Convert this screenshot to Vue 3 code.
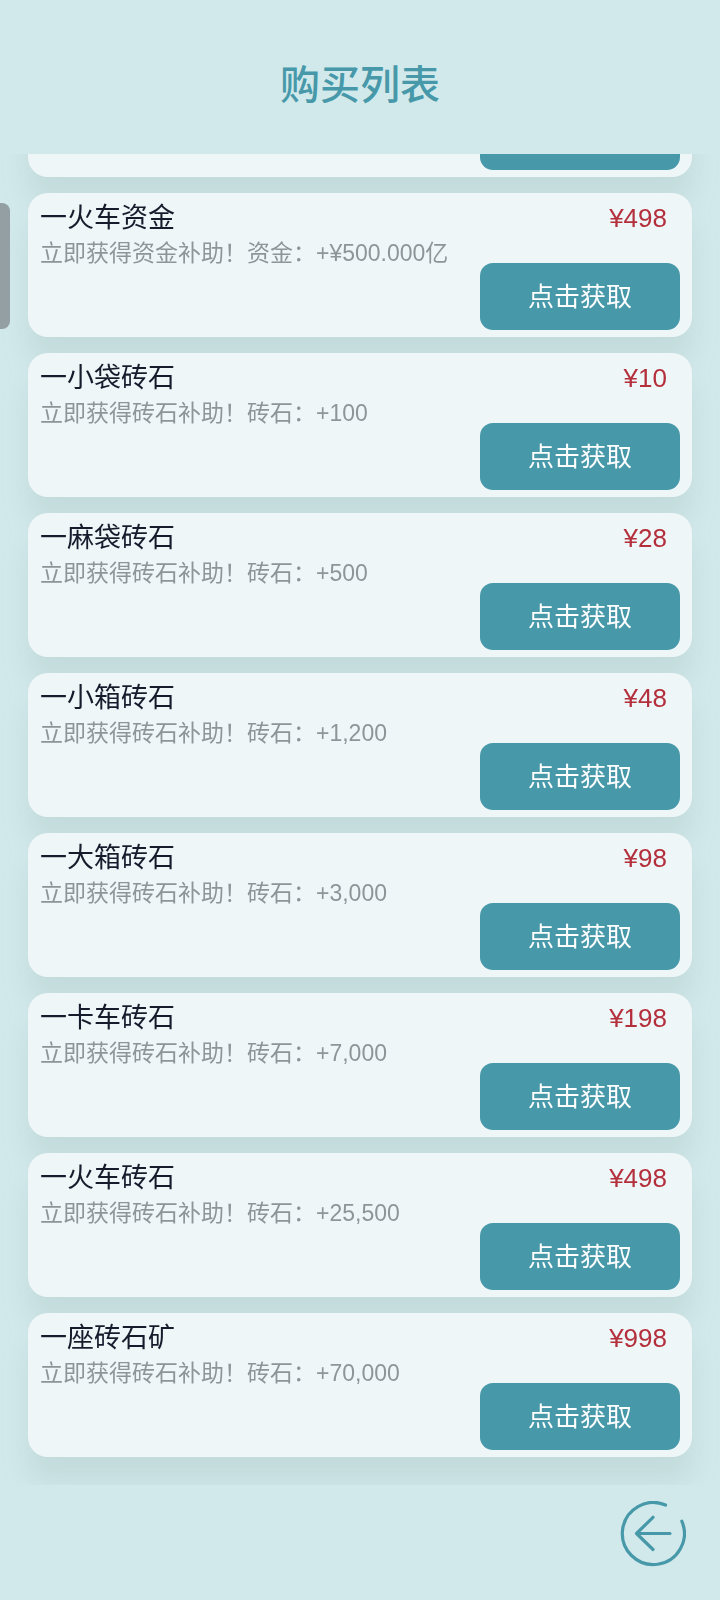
<script setup>
const items = [
  { id: 0, name: '', desc: '', price: '', action: '' },
  { id: 1, name: '一火车资金', desc: '立即获得资金补助！资金：+¥500.000亿', price: '¥498', action: '点击获取' },
  { id: 2, name: '一小袋砖石', desc: '立即获得砖石补助！砖石：+100', price: '¥10', action: '点击获取' },
  { id: 3, name: '一麻袋砖石', desc: '立即获得砖石补助！砖石：+500', price: '¥28', action: '点击获取' },
  { id: 4, name: '一小箱砖石', desc: '立即获得砖石补助！砖石：+1,200', price: '¥48', action: '点击获取' },
  { id: 5, name: '一大箱砖石', desc: '立即获得砖石补助！砖石：+3,000', price: '¥98', action: '点击获取' },
  { id: 6, name: '一卡车砖石', desc: '立即获得砖石补助！砖石：+7,000', price: '¥198', action: '点击获取' },
  { id: 7, name: '一火车砖石', desc: '立即获得砖石补助！砖石：+25,500', price: '¥498', action: '点击获取' },
  { id: 8, name: '一座砖石矿', desc: '立即获得砖石补助！砖石：+70,000', price: '¥998', action: '点击获取' },
]
</script>

<template>
  <div class="page">
    <header class="header">
      <h1>购买列表</h1>
    </header>
    <main class="scroller">
      <ul class="list">
        <li v-for="item in items" :key="item.id" class="card">
          <div class="info">
            <h2>{{ item.name }}</h2>
            <p>{{ item.desc }}</p>
          </div>
          <div class="side">
            <span class="price">{{ item.price }}</span>
            <button type="button" class="buy">{{ item.action }}</button>
          </div>
        </li>
      </ul>
    </main>
    <footer class="footer">
      <button type="button" class="back" aria-label="返回">
        <svg viewBox="0 0 66 66" width="66" height="66" fill="none" stroke="#4799aa" stroke-width="3.2" stroke-linecap="round" stroke-linejoin="round">
          <path d="M45.5 4A31 31 0 1 0 61.8 20.2" />
          <path d="M50 32.5H16.5M33 16.3L16.5 32.5L33 48.5" />
        </svg>
      </button>
    </footer>
    <div class="handle"></div>
  </div>
</template>

<style>
body {
  margin: 0;
  background: #d2e9eb;
}
</style>

<style scoped>
.page {
  position: relative;
  display: flex;
  flex-direction: column;
  height: 100vh;
  background: #d2e9eb;
  font-family: "Liberation Sans", "Noto Sans CJK SC", sans-serif;
}
.header {
  flex: none;
  padding: 55px 0 39px;
  text-align: center;
}
h1 {
  margin: 0;
  font-size: 40px;
  line-height: 60px;
  font-weight: 500;
  color: #4799aa;
}
.scroller {
  flex: 1;
  min-height: 0;
  overflow: hidden;
  display: flex;
  flex-direction: column;
  justify-content: flex-end;
}
.list {
  margin: 0;
  padding: 0 28px 28px;
  list-style: none;
  display: flex;
  flex-direction: column;
  gap: 16px;
  filter: drop-shadow(0 25px 13px rgba(120, 150, 145, 0.16));
}
.card {
  display: flex;
  justify-content: space-between;
  box-sizing: border-box;
  min-height: 144px;
  padding: 7px 12px;
  border-radius: 20px;
  background: #eef6f8;
}
h2 {
  margin: 0;
  font-size: 27px;
  line-height: 36px;
  font-weight: 400;
  color: #171c2c;
}
p {
  margin: 0;
  font-size: 23px;
  line-height: 34px;
  color: #8d9599;
}
.side {
  display: flex;
  flex-direction: column;
  justify-content: space-between;
  align-items: flex-end;
}
.price {
  padding-right: 13px;
  font-size: 26px;
  line-height: 36px;
  color: #b42f3c;
}
.buy {
  width: 200px;
  height: 67px;
  padding: 0 0 4px;
  border: 0;
  border-radius: 13px;
  background: #4799aa;
  color: #fff;
  font-family: inherit;
  font-size: 26px;
}
.footer {
  flex: none;
  display: flex;
  justify-content: flex-end;
  padding: 16px 34px 33px;
}
.back {
  padding: 0;
  border: 0;
  background: none;
}
.back svg {
  display: block;
}
.handle {
  position: absolute;
  left: 0;
  top: 203px;
  width: 10px;
  height: 126px;
  border-radius: 0 8px 8px 0;
  background: #939fa3;
}
</style>
